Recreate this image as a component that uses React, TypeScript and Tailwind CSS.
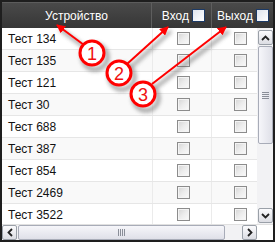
import React from "react"

const rows = ["134", "135", "121", "30", "688", "387", "854", "2469", "3522"]

function GrayCheck() {
  return (
    <span className="block w-[13px] h-[13px] border border-[#8c8c8c] bg-gradient-to-br from-[#d4d4d4] via-[#ececec] to-[#fafafa] shadow-[inset_0_0_0_1px_#f4f4f4]" />
  )
}

function HeadCheck() {
  return (
    <span className="block w-[13px] h-[13px] border border-[#1c3a66] bg-gradient-to-br from-[#dde3ec] to-white" />
  )
}

function ScrollBtn({ children }: { children: React.ReactNode }) {
  return (
    <div className="w-[15px] h-[15px] shrink-0 flex items-center justify-center border border-[#9aa0a8] rounded-[2px] bg-gradient-to-b from-[#fbfbfd] to-[#dcdde3] text-[#222]">
      {children}
    </div>
  )
}

function Annotations() {
  const circles = [
    { x: 92, y: 53, n: "1" },
    { x: 119, y: 73, n: "2" },
    { x: 143, y: 94, n: "3" },
  ]
  const arrows = [
    { x1: 84, y1: 45, x2: 57, y2: 25 },
    { x1: 127, y1: 64, x2: 168, y2: 27 },
    { x1: 152, y1: 84, x2: 226, y2: 27 },
  ]
  return (
    <svg className="absolute left-0 top-0 pointer-events-none" width="275" height="242" viewBox="0 0 275 242">
      <defs>
        <filter id="sh" x="-20%" y="-20%" width="160%" height="160%">
          <feGaussianBlur stdDeviation="2" />
        </filter>
        <marker id="ah" markerWidth="9" markerHeight="9" refX="8" refY="4.5" orient="auto" markerUnits="userSpaceOnUse">
          <path d="M0,0 L9,4.5 L0,9 Z" fill="#f00" />
        </marker>
      </defs>
      <g filter="url(#sh)" opacity="0.7">
        {arrows.map((a, i) => (
          <line key={i} x1={a.x1 + 3} y1={a.y1 + 4} x2={a.x2 + 3} y2={a.y2 + 4} stroke="#666" strokeWidth="3" />
        ))}
        {circles.map((c) => (
          <circle key={c.n} cx={c.x + 3} cy={c.y + 4} r="12.5" fill="none" stroke="#666" strokeWidth="3.5" />
        ))}
      </g>
      {arrows.map((a, i) => (
        <line key={i} x1={a.x1} y1={a.y1} x2={a.x2} y2={a.y2} stroke="#f00" strokeWidth="2" markerEnd="url(#ah)" />
      ))}
      {circles.map((c) => (
        <g key={c.n}>
          <circle cx={c.x} cy={c.y} r="12" fill="#fff" stroke="#f00" strokeWidth="3" />
          <text
            x={c.x}
            y={c.y + 6.5}
            textAnchor="middle"
            fontSize="18"
            fontFamily="'Liberation Sans', Arial, sans-serif"
            fill="#f01010"
          >
            {c.n}
          </text>
        </g>
      ))}
    </svg>
  )
}

export default function App() {
  return (
    <div className="relative w-[275px] h-[242px] bg-[#1e1e1e] p-[2px] font-['Liberation_Sans',Arial,sans-serif] text-[12px]">
      <div className="flex flex-col w-full h-full bg-white overflow-hidden">
        <div className="flex h-[26px] shrink-0 bg-gradient-to-b from-[#4a4a4a] to-[#363636] text-white border-t border-[#5c5c5c]">
          <div className="w-[150px] flex items-center justify-center border-r border-[#5e5e5e]">Устройство</div>
          <div className="w-[60px] flex items-center justify-end gap-[3px] pr-[6px] border-r border-[#5e5e5e]">
            <span>Вход</span>
            <HeadCheck />
          </div>
          <div className="flex-1 flex items-center justify-end gap-[3px] pr-[4px]">
            <span>Выход</span>
            <HeadCheck />
          </div>
        </div>

        <div className="flex flex-1 min-h-0">
          <div className="flex-1 overflow-hidden">
            {rows.map((r, i) => (
              <div
                key={r}
                className={`flex h-[22px] border-b border-[#e6e6e6] ${i % 2 ? "bg-[#f9f9f9]" : "bg-white"}`}
              >
                <div className="w-[150px] flex items-center pl-[6px] text-[#111]">Тест {r}</div>
                <div className="w-[60px] flex items-center justify-center border-x border-[#ebebeb] pl-[2px]">
                  <GrayCheck />
                </div>
                <div className="flex-1 flex items-center justify-center pl-[12px]">
                  <GrayCheck />
                </div>
              </div>
            ))}
          </div>
          <div className="w-[16px] flex flex-col bg-[#f2f2f4] pl-[1px] pt-[2px] pb-[1px]">
            <ScrollBtn>
              <svg width="9" height="6" viewBox="0 0 9 6"><path d="M1 5 L4.5 1.5 L8 5" fill="none" stroke="#222" strokeWidth="1.8" /></svg>
            </ScrollBtn>
            <div className="h-[98px] mt-[1px] flex items-center justify-center border border-[#a8acb8] rounded-[2px] bg-gradient-to-r from-[#f6f6fa] to-[#dfe0e8]">
              <div className="flex flex-col gap-[1px]">
                <span className="block w-[7px] h-px bg-[#8a8e98]" />
                <span className="block w-[7px] h-px bg-[#8a8e98]" />
                <span className="block w-[7px] h-px bg-[#8a8e98]" />
                <span className="block w-[7px] h-px bg-[#8a8e98]" />
              </div>
            </div>
            <div className="flex-1" />
            <ScrollBtn>
              <svg width="9" height="6" viewBox="0 0 9 6"><path d="M1 1 L4.5 4.5 L8 1" fill="none" stroke="#222" strokeWidth="1.8" /></svg>
            </ScrollBtn>
          </div>
        </div>

        <div className="flex h-[16px] shrink-0 bg-[#f2f2f4] border-t border-[#e0e0e0]">
          <ScrollBtn>
            <svg width="6" height="9" viewBox="0 0 6 9"><path d="M5 1 L1.5 4.5 L5 8" fill="none" stroke="#222" strokeWidth="1.8" /></svg>
          </ScrollBtn>
          <div className="w-[207px] ml-[1px] flex items-center justify-center border border-[#a8acb8] rounded-[2px] bg-gradient-to-b from-[#f6f6fa] to-[#dfe0e8]">
            <div className="flex gap-[1px]">
              <span className="block w-px h-[7px] bg-[#8a8e98]" />
              <span className="block w-px h-[7px] bg-[#8a8e98]" />
              <span className="block w-px h-[7px] bg-[#8a8e98]" />
              <span className="block w-px h-[7px] bg-[#8a8e98]" />
            </div>
          </div>
          <div className="flex-1" />
          <ScrollBtn>
            <svg width="6" height="9" viewBox="0 0 6 9"><path d="M1 1 L4.5 4.5 L1 8" fill="none" stroke="#222" strokeWidth="1.8" /></svg>
          </ScrollBtn>
          <div className="w-[16px] bg-white" />
        </div>
      </div>
      <Annotations />
    </div>
  )
}
